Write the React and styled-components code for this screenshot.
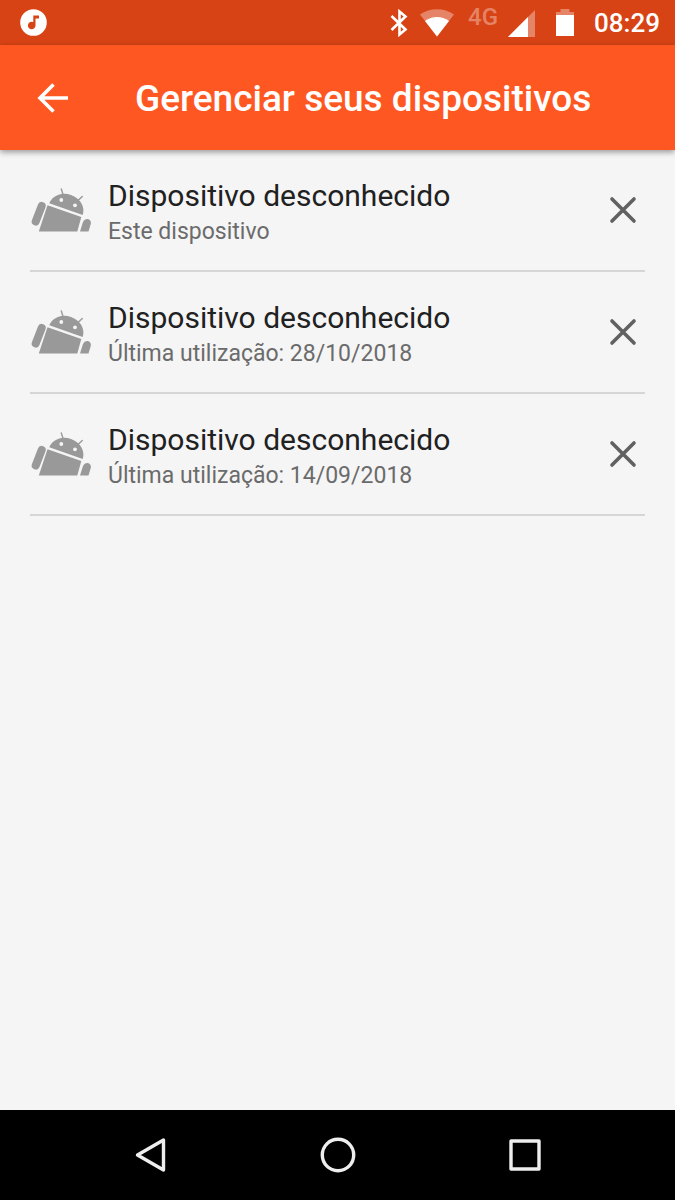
import React from "react";
import styled, { createGlobalStyle } from "styled-components";

const GlobalStyle = createGlobalStyle`
  * { box-sizing: border-box; }
  body {
    margin: 0;
    background: #f5f5f5;
    font-family: Roboto, "Liberation Sans", sans-serif;
  }
`;

const Screen = styled.div`
  display: flex;
  flex-direction: column;
  min-height: 100vh;
`;

const StatusBar = styled.div`
  display: flex;
  align-items: center;
  justify-content: space-between;
  height: 45px;
  padding: 0 15px 0 20px;
  background: #d84315;
  color: #fff;
  svg { display: block; }
`;

const StatusGroup = styled.div`
  display: flex;
  align-items: center;
`;

const StatusIcons = styled.div`
  display: flex;
  align-items: center;
  gap: 10px;
  margin-right: 20px;
`;

const NetworkLabel = styled.span`
  align-self: flex-start;
  margin-left: 4px;
  font-size: 24px;
  line-height: 16px;
  font-weight: 500;
  color: rgba(255, 255, 255, 0.35);
`;

const Battery = styled.span`
  margin-left: 11px;
`;

const Clock = styled.time`
  font-size: 26px;
  line-height: 32px;
  font-weight: 500;
`;

const AppBar = styled.header`
  display: flex;
  align-items: center;
  height: 105px;
  padding: 0 30px;
  gap: 60px;
  background: #ff5722;
  color: #fff;
  box-shadow: 0 2px 6px rgba(0, 0, 0, 0.4);
`;

const IconButton = styled.button`
  display: flex;
  align-items: center;
  justify-content: center;
  flex: none;
  width: 45px;
  height: 45px;
  padding: 0;
  border: 0;
  background: none;
  color: inherit;
  cursor: pointer;
  svg { display: block; }
`;

const Title = styled.h1`
  margin: 0;
  padding-top: 2px;
  font-size: 37px;
  line-height: 44px;
  font-weight: 500;
  white-space: nowrap;
`;

const DeviceList = styled.ul`
  flex: 1;
  margin: 0;
  padding: 0 30px;
  list-style: none;
`;

const DeviceRow = styled.li`
  display: flex;
  align-items: center;
  height: 122px;
  border-bottom: 2px solid #d6d6d6;
  color: #616161;
  > svg { flex: none; }
`;

const DeviceText = styled.div`
  flex: 1;
  min-width: 0;
  margin-left: 16px;
  padding-top: 6px;
`;

const DeviceName = styled.div`
  font-size: 30px;
  line-height: 38px;
  color: #212121;
`;

const DeviceInfo = styled.div`
  font-size: 23px;
  line-height: 34px;
  color: #6b6b6b;
`;

const NavBar = styled.nav`
  display: flex;
  align-items: center;
  height: 90px;
  padding: 0 56px;
  background: #000;
  color: #eee;
`;

const NavButton = styled(IconButton)`
  flex: 1;
  height: 90px;
`;

const MusicIcon = () => (
  <svg width="27" height="45" viewBox="0 0 27 45" aria-hidden="true">
    <circle cx="13.5" cy="22.5" r="13.3" fill="#fff" />
    <path d="M13.300 15.500H19V18.400H15.500V25.400A3.800 3.800 0 1 1 13.300 22Z" fill="#d84315" />
  </svg>
);

const BluetoothIcon = () => (
  <svg width="20" height="28" viewBox="0 0 20 28" aria-hidden="true">
    <path d="M1.500 7 15.500 20.500 9.500 25.500V2.500L15.500 7.500 1.500 21" fill="none" stroke="#fff" strokeWidth="2.600" />
  </svg>
);

const WifiIcon = () => (
  <svg width="34" height="28" viewBox="0 0 34 28" aria-hidden="true">
    <path d="M17 27.500 0 5.500C10-1.500 24-1.500 34 5.500Z" fill="#fff" opacity="0.35" />
    <path d="M17 27.500 5 12C12 6.800 22 6.800 29 12Z" fill="#fff" />
  </svg>
);

const SignalIcon = () => (
  <svg width="27" height="28" viewBox="0 0 27 28" aria-hidden="true">
    <path d="M0 28 27 1V28Z" fill="#fff" opacity="0.35" />
    <path d="M0 28 20 8V28Z" fill="#fff" />
  </svg>
);

const BatteryIcon = () => (
  <svg width="18" height="28" viewBox="0 0 18 28" aria-hidden="true">
    <path d="M0 6V3H4.500V0H13.500V3H18V6Z" fill="#fff" opacity="0.35" />
    <path d="M0 6H18V27H0Z" fill="#fff" />
  </svg>
);

const BackArrow = () => (
  <svg width="32" height="32" viewBox="0 0 32 32" aria-hidden="true">
    <path d="M31 16H3.500M16.500 2.500 3 16 16.500 29.500" fill="none" stroke="#fff" strokeWidth="3.600" />
  </svg>
);

const AndroidIcon = () => (
  <svg width="62" height="45" viewBox="-1 0 62 45" aria-hidden="true">
    <g fill="#999" stroke="none">
      <path d="M10.700 18 4.700 33.500" stroke="#999" strokeWidth="8" strokeLinecap="round" />
      <path d="M16.500 17.300 50.300 29 46.300 43.500H7.800Z" />
      <path d="M49 43.500 51.800 34.500C54 28.500 61.500 30.500 59.600 36.500L57.500 43.500Z" />
      <path d="M18.300 15.300A17.700 15.500 19 0 1 51.700 27Z" />
      <path d="M32.500 8 30.300 1M47 12.500 51.300 8.500" stroke="#999" strokeWidth="1.400" strokeLinecap="round" />
    </g>
    <circle cx="30.300" cy="12" r="1.900" fill="#f5f5f5" />
    <circle cx="44" cy="17.300" r="1.900" fill="#f5f5f5" />
  </svg>
);

const CloseIcon = () => (
  <svg width="28" height="28" viewBox="0 0 28 28" aria-hidden="true">
    <path d="M3 3 25 25M25 3 3 25" fill="none" stroke="currentColor" strokeWidth="3.600" strokeLinecap="round" />
  </svg>
);

const NavIcon = ({ children }) => (
  <svg width="40" height="40" viewBox="0 0 40 40" fill="none" stroke="currentColor" strokeWidth="3.400" strokeLinejoin="round" aria-hidden="true">
    {children}
  </svg>
);

const devices = [
  { id: 1, info: "Este dispositivo" },
  { id: 2, info: "Última utilização: 28/10/2018" },
  { id: 3, info: "Última utilização: 14/09/2018" },
];

export default function App() {
  return (
    <Screen>
      <GlobalStyle />
      <StatusBar>
        <MusicIcon />
        <StatusGroup>
          <StatusIcons>
            <BluetoothIcon />
            <WifiIcon />
            <NetworkLabel>4G</NetworkLabel>
            <SignalIcon />
            <Battery><BatteryIcon /></Battery>
          </StatusIcons>
          <Clock>08:29</Clock>
        </StatusGroup>
      </StatusBar>
      <AppBar>
        <IconButton aria-label="Voltar"><BackArrow /></IconButton>
        <Title>Gerenciar seus dispositivos</Title>
      </AppBar>
      <DeviceList>
        {devices.map((device) => (
          <DeviceRow key={device.id}>
            <AndroidIcon />
            <DeviceText>
              <DeviceName>Dispositivo desconhecido</DeviceName>
              <DeviceInfo>{device.info}</DeviceInfo>
            </DeviceText>
            <IconButton aria-label="Remover dispositivo"><CloseIcon /></IconButton>
          </DeviceRow>
        ))}
      </DeviceList>
      <NavBar>
        <NavButton aria-label="Voltar">
          <NavIcon><path d="M33.500 5V35L7.500 20Z" /></NavIcon>
        </NavButton>
        <NavButton aria-label="Início">
          <NavIcon><circle cx="20" cy="20" r="15.700" /></NavIcon>
        </NavButton>
        <NavButton aria-label="Recentes">
          <NavIcon><rect x="6" y="6" width="28" height="28" /></NavIcon>
        </NavButton>
      </NavBar>
    </Screen>
  );
}
